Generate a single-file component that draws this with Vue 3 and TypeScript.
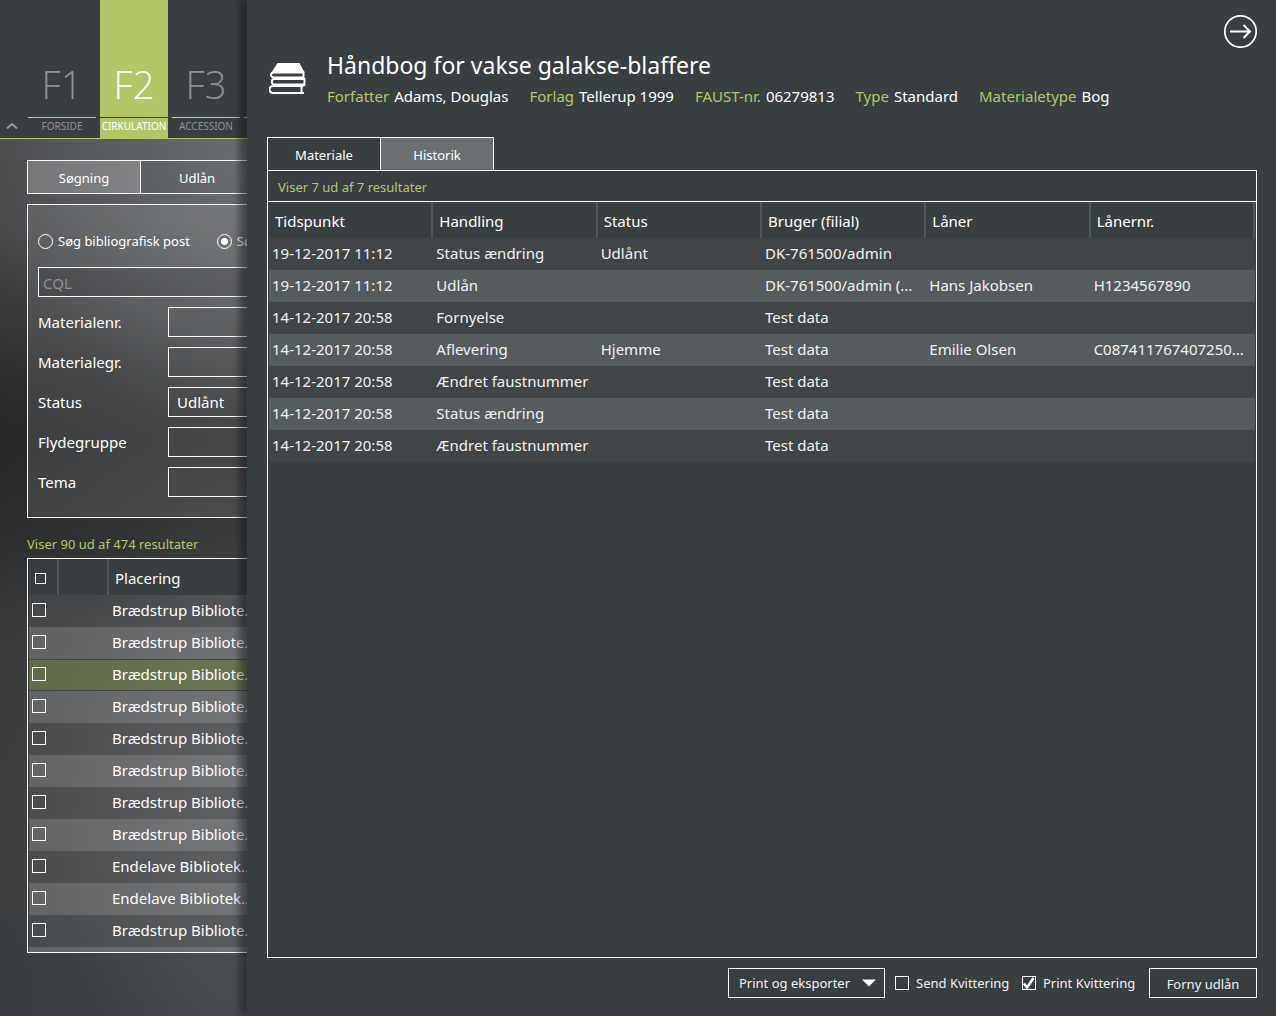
<script setup lang="ts">
import { ref } from 'vue'

interface Shortcut {
  key: string
  label: string
  tone: string
}

interface HistoryEntry {
  time: string
  action: string
  status: string
  user: string
  borrower: string
  borrowerNo: string
}

const shortcuts: Shortcut[] = [
  { key: 'F1', label: 'FORSIDE', tone: 'sand' },
  { key: 'F2', label: 'CIRKULATION', tone: 'active' },
  { key: 'F3', label: 'ACCESSION', tone: 'sky' },
  { key: '', label: '', tone: 'sky' },
]

const searchMode = ref('item')
const statusFilter = ref('Udlånt')

const placements: string[] = [
  'Brædstrup Bibliote...',
  'Brædstrup Bibliote...',
  'Brædstrup Bibliote...',
  'Brædstrup Bibliote...',
  'Brædstrup Bibliote...',
  'Brædstrup Bibliote...',
  'Brædstrup Bibliote...',
  'Brædstrup Bibliote...',
  'Endelave Bibliotek...',
  'Endelave Bibliotek...',
  'Brædstrup Bibliote...',
  '',
]
const selectedRow = ref(2)

const facts = [
  { label: 'Forfatter', value: 'Adams, Douglas' },
  { label: 'Forlag', value: 'Tellerup 1999' },
  { label: 'FAUST-nr.', value: '06279813' },
  { label: 'Type', value: 'Standard' },
  { label: 'Materialetype', value: 'Bog' },
]

const columns = ['Tidspunkt', 'Handling', 'Status', 'Bruger (filial)', 'Låner', 'Lånernr.']

const history: HistoryEntry[] = [
  { time: '19-12-2017 11:12', action: 'Status ændring', status: 'Udlånt', user: 'DK-761500/admin', borrower: '', borrowerNo: '' },
  { time: '19-12-2017 11:12', action: 'Udlån', status: '', user: 'DK-761500/admin (...', borrower: 'Hans Jakobsen', borrowerNo: 'H1234567890' },
  { time: '14-12-2017 20:58', action: 'Fornyelse', status: '', user: 'Test data', borrower: '', borrowerNo: '' },
  { time: '14-12-2017 20:58', action: 'Aflevering', status: 'Hjemme', user: 'Test data', borrower: 'Emilie Olsen', borrowerNo: 'C087411767407250...' },
  { time: '14-12-2017 20:58', action: 'Ændret faustnummer', status: '', user: 'Test data', borrower: '', borrowerNo: '' },
  { time: '14-12-2017 20:58', action: 'Status ændring', status: '', user: 'Test data', borrower: '', borrowerNo: '' },
  { time: '14-12-2017 20:58', action: 'Ændret faustnummer', status: '', user: 'Test data', borrower: '', borrowerNo: '' },
]

const sendReceipt = ref(false)
const printReceipt = ref(true)
</script>

<template>
  <div class="app">
    <section class="workspace">
      <header class="topbar">
        <button class="collapse" type="button" aria-label="Skjul menu">
          <svg width="12" height="8" viewBox="0 0 12 8" fill="none" stroke="#96999b" stroke-width="2">
            <path d="M1 6.500 6 2l5 4.500" />
          </svg>
        </button>
        <nav class="shortcuts">
          <a v-for="(s, i) in shortcuts" :key="i" href="#" class="shortcut" :class="s.tone">
            <span class="shortcut-key">{{ s.key }}</span>
            <span class="shortcut-label">{{ s.label }}</span>
          </a>
        </nav>
      </header>

      <main class="page">
        <div class="page-tabs">
          <button type="button" class="page-tab current">Søgning</button>
          <button type="button" class="page-tab">Udlån</button>
        </div>

        <form class="search" @submit.prevent>
          <div class="modes">
            <label class="mode"><input v-model="searchMode" type="radio" name="mode" value="post" />Søg bibliografisk post</label>
            <label class="mode"><input v-model="searchMode" type="radio" name="mode" value="item" />Søg</label>
          </div>
          <input class="field cql" type="text" placeholder="CQL" aria-label="CQL" />
          <div class="line">
            <label for="item-no">Materialenr.</label>
            <input id="item-no" class="field" type="text" />
          </div>
          <div class="line">
            <label for="item-group">Materialegr.</label>
            <input id="item-group" class="field" type="text" />
          </div>
          <div class="line">
            <label for="status">Status</label>
            <select id="status" v-model="statusFilter" class="field">
              <option>Udlånt</option>
              <option>Hjemme</option>
            </select>
          </div>
          <div class="line">
            <label for="float-group">Flydegruppe</label>
            <input id="float-group" class="field" type="text" />
          </div>
          <div class="line">
            <label for="theme">Tema</label>
            <input id="theme" class="field" type="text" />
          </div>
        </form>

        <p class="count">Viser 90 ud af 474 resultater</p>

        <div class="results">
          <table class="result-table">
            <colgroup>
              <col class="col-check" />
              <col class="col-icon" />
              <col />
            </colgroup>
            <thead>
              <tr>
                <th><input class="box small" type="checkbox" aria-label="Vælg alle" /></th>
                <th></th>
                <th>Placering</th>
              </tr>
            </thead>
            <tbody>
              <tr v-for="(p, i) in placements" :key="i" :class="{ selected: i === selectedRow }">
                <td><input class="box" type="checkbox" :aria-label="'Vælg række ' + (i + 1)" /></td>
                <td></td>
                <td>{{ p }}</td>
              </tr>
            </tbody>
          </table>
        </div>
      </main>
    </section>

    <aside class="drawer">
      <header class="drawer-head">
        <svg class="books" width="38" height="34" viewBox="0 0 38 34" fill="none" stroke="#fff" stroke-width="2">
          <path d="M8.500 1h22l5 9.500H2.500z" fill="#fff" stroke="none" />
          <path d="M35.500 10.500H4.500a2.500 2.500 0 0 0 0 5h31M34.500 10.500v5" />
          <path d="M36.500 17H5.500a2.700 2.700 0 0 0 0 5.400h31M35.500 17v5.400" />
          <path d="M34.500 24H4a3.500 3.500 0 0 0 0 7h31M32.500 24v7" />
          <path d="M5 23.200h31" />
        </svg>
        <div class="heading">
          <h1>Håndbog for vakse galakse-blaffere</h1>
          <dl class="facts">
            <div v-for="f in facts" :key="f.label" class="fact">
              <dt>{{ f.label }}</dt>
              <dd>{{ f.value }}</dd>
            </div>
          </dl>
        </div>
        <button class="close" type="button" aria-label="Luk panel">
          <svg width="34" height="34" viewBox="0 0 34 34" fill="none" stroke="#fff" stroke-width="2">
            <circle cx="17.500" cy="17.500" r="15.700" stroke-width="1.700" />
            <path d="M7 17.500h20M20.500 11 27 17.500 20.500 24" />
          </svg>
        </button>
      </header>

      <div class="tabs">
        <button type="button" class="tab">Materiale</button>
        <button type="button" class="tab current">Historik</button>
      </div>

      <div class="panel">
        <p class="panel-count">Viser 7 ud af 7 resultater</p>
        <table class="history">
          <thead>
            <tr>
              <th v-for="c in columns" :key="c">{{ c }}</th>
            </tr>
          </thead>
          <tbody>
            <tr v-for="(h, i) in history" :key="i">
              <td>{{ h.time }}</td>
              <td>{{ h.action }}</td>
              <td>{{ h.status }}</td>
              <td>{{ h.user }}</td>
              <td>{{ h.borrower }}</td>
              <td>{{ h.borrowerNo }}</td>
            </tr>
          </tbody>
        </table>
      </div>

      <footer class="actions">
        <button type="button" class="action export">
          Print og eksporter
          <svg width="14" height="8" viewBox="0 0 14 8"><path d="M0 .5h14L7 7.500z" fill="#fff" /></svg>
        </button>
        <label class="option"><input v-model="sendReceipt" class="box" type="checkbox" />Send Kvittering</label>
        <label class="option"><input v-model="printReceipt" class="box" type="checkbox" />Print Kvittering</label>
        <button type="button" class="action renew">Forny udlån</button>
      </footer>
    </aside>
  </div>
</template>

<style>
body {
  margin: 0;
  background: #393e41;
}
</style>

<style scoped>
.app {
  display: flex;
  height: 100vh;
  overflow: hidden;
  color: #fff;
  font: 15px/20px 'Noto Sans', 'Open Sans', sans-serif;
}

.app *,
.app *::before {
  box-sizing: border-box;
}

button,
input,
select {
  margin: 0;
  color: inherit;
  font: inherit;
}

button {
  padding: 0;
  border: 0;
  background: none;
}

/* Page behind the drawer */
.workspace {
  display: flex;
  flex: 0 0 247px;
  flex-direction: column;
  overflow: hidden;
  background:
    radial-gradient(280px 270px at 270px 170px, rgba(125, 128, 131, 0.65), rgba(125, 128, 131, 0) 100%),
    radial-gradient(260px 340px at 300px 800px, rgba(120, 122, 124, 0.4), rgba(120, 122, 124, 0) 100%),
    linear-gradient(90deg, rgba(110, 112, 114, 0) 0, rgba(110, 112, 114, 0.14) 100%),
    linear-gradient(#4b4d4f 140px, #484a4c 220px, #2b2d2f 380px, #27282a 440px, #2d2e30 540px, #393b3d 640px, #3d3e40 820px, #393d3f 100%);
}

.topbar {
  display: flex;
  flex: none;
  height: 139px;
  border-bottom: 1px solid #b4c768;
  background: #393e41;
}

.collapse {
  flex: 0 0 28px;
  align-self: flex-end;
  height: 24px;
  padding-right: 4px;
  line-height: 0;
}

.shortcuts {
  display: flex;
  flex: none;
  gap: 4px;
}

.shortcut {
  display: flex;
  flex: none;
  flex-direction: column;
  width: 68px;
  color: #8e9193;
  text-align: center;
  text-decoration: none;
}

.shortcut-key {
  height: 118px;
  padding-top: 59px;
  border-bottom: 1px solid #b9cdd4;
  font-family: 'Open Sans', 'Noto Sans', sans-serif;
  font-size: 38px;
  font-weight: 300;
  line-height: 50px;
}

.sand .shortcut-key {
  border-color: #cfc584;
}

.shortcut-label {
  display: flex;
  justify-content: center;
  font-size: 10px;
  line-height: 16px;
}

.active {
  background: #b4c768;
  color: #fff;
}

.active .shortcut-key {
  border-color: #393e41;
}

.page {
  display: flex;
  flex: 1;
  flex-direction: column;
  width: 460px;
  min-height: 0;
  padding: 21px 0 63px 27px;
}

.page-tabs {
  display: flex;
  flex: none;
  height: 34px;
  border: 1px solid #fff;
}

.page-tab {
  width: 113px;
  padding-top: 2px;
  border-right: 1px solid #fff;
  font-size: 13px;
}

.page-tab.current {
  background: rgba(255, 255, 255, 0.22);
}

.search {
  display: flex;
  flex: none;
  flex-direction: column;
  gap: 10px;
  height: 314px;
  margin-top: 10px;
  padding: 26px 10px 0;
  border: 1px solid #fff;
  background: rgba(255, 255, 255, 0.1);
}

.modes {
  display: flex;
  flex: none;
  gap: 27px;
  height: 20px;
  margin-bottom: 6px;
  font-size: 13px;
}

.mode {
  display: flex;
  align-items: center;
  gap: 5px;
}

.mode input {
  width: 15px;
  height: 15px;
  border: 1px solid #fff;
  border-radius: 50%;
  appearance: none;
}

.mode input:checked {
  background: radial-gradient(circle, #fff 3px, transparent 4px);
}

.line {
  display: flex;
  align-items: center;
  height: 30px;
}

.line label {
  flex: 0 0 130px;
}

.field {
  flex: none;
  width: 292px;
  height: 30px;
  padding: 0 8px;
  border: 1px solid #fff;
  border-radius: 0;
  outline: 0;
  background: transparent;
  appearance: none;
}

.field option {
  background: #393e41;
}

.cql {
  width: 411px;
  padding: 2px 4px 0;
  background: rgba(40, 42, 44, 0.2);
}

.cql::placeholder {
  color: #8d9092;
  opacity: 1;
}

.count {
  flex: none;
  margin: 16px 0 4px;
  color: #b4c768;
  font-size: 13px;
}

.results {
  flex: 1;
  min-height: 0;
  overflow: hidden;
  padding: 0 1px;
  border: 1px solid #fff;
}

table {
  width: 100%;
  border-spacing: 0;
  table-layout: fixed;
}

th,
td {
  overflow: hidden;
  text-align: left;
  font-weight: 400;
  white-space: nowrap;
}

th {
  height: 36px;
  padding: 2px 6px 0;
  border-right: 2px solid #50545a;
  background: #393e41;
}

td {
  height: 32px;
  padding: 0 3px 2px;
}

.col-check {
  width: 30px;
}

.col-icon {
  width: 50px;
}

.result-table tbody tr {
  background: rgba(255, 255, 255, 0.07);
}

.result-table tbody tr:nth-child(even) {
  background: rgba(255, 255, 255, 0.2);
}

.result-table tbody tr.selected {
  background: rgba(150, 172, 84, 0.42);
  box-shadow: inset 0 1px #45484a, inset 0 -1px #45484a;
}

.box {
  display: block;
  flex: none;
  width: 14px;
  height: 14px;
  border: 1px solid #fff;
  border-radius: 0;
  appearance: none;
}

.box.small {
  width: 11px;
  height: 11px;
}

.box:checked {
  background: url("data:image/svg+xml,%3Csvg xmlns='http://www.w3.org/2000/svg' viewBox='0 0 12 12'%3E%3Cpath d='M1 6.500 4 10.500 10.500 1' fill='none' stroke='%23fff' stroke-width='2.600'/%3E%3C/svg%3E");
}

/* Drawer */
.drawer {
  position: relative;
  display: flex;
  flex: 1;
  flex-direction: column;
  min-width: 0;
  padding: 0 19px 18px 20px;
  background: #393e41;
  box-shadow: -8px 0 7px rgba(24, 24, 26, 0.5);
}

.drawer-head {
  display: flex;
  flex: none;
  height: 137px;
}

.books {
  flex: none;
  margin: 62px 20px 0 2px;
}

.heading {
  flex: 1;
  padding-top: 49px;
}

h1 {
  margin: 0;
  font-size: 23px;
  font-weight: 400;
  line-height: 32px;
}

.facts {
  display: flex;
  gap: 21px;
  margin: 5px 0 0;
}

.fact {
  display: flex;
  gap: 5px;
}

dt {
  color: #b4c768;
}

dd {
  margin: 0;
}

.close {
  flex: none;
  align-self: flex-start;
  margin-top: 14px;
  line-height: 0;
}

.tabs {
  display: flex;
  flex: none;
}

.tab {
  width: 114px;
  height: 33px;
  padding-top: 2px;
  border: 1px solid #fff;
  border-bottom: 0;
  font-size: 13px;
}

.tab.current {
  margin-left: -1px;
  background: #6a6f71;
}

.panel {
  flex: 1;
  min-height: 0;
  border: 1px solid #fff;
}

.panel-count {
  margin: 0;
  padding: 6px 10px 4px;
  border-bottom: 1px solid #fff;
  color: #b4c768;
  font-size: 13px;
}

.history {
  width: calc(100% - 2px);
  margin: 0 1px;
}

.history tbody tr {
  background: #414547;
}

.history tbody tr:nth-child(even) {
  background: #565b5e;
}

.history td {
  color: #f0f1f1;
}

.actions {
  display: flex;
  flex: none;
  align-items: center;
  justify-content: flex-end;
  gap: 10px;
  height: 30px;
  margin-top: 10px;
  color: #f0f1f1;
  font-size: 13px;
}

.action {
  height: 30px;
  padding-top: 2px;
  border: 1px solid #fff;
}

.export {
  display: flex;
  align-items: center;
  justify-content: space-between;
  width: 157px;
  padding: 0 8px 0 10px;
}

.renew {
  width: 108px;
}

.option {
  display: flex;
  align-items: center;
  gap: 7px;
  width: 117px;
}
</style>
